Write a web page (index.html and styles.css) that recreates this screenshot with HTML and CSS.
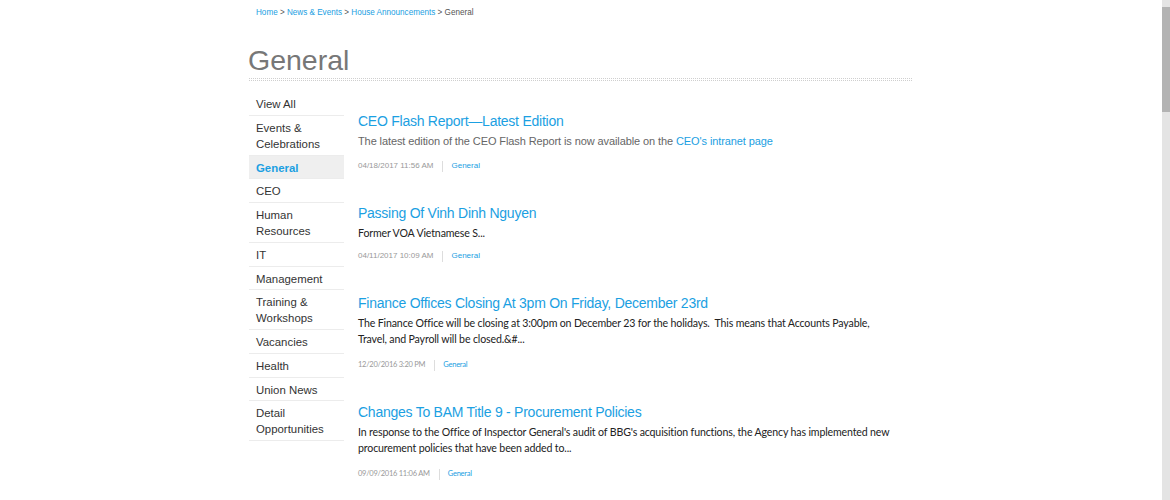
FILE: index.html
```html
<!DOCTYPE html>
<html lang="en">
<head>
  <meta charset="UTF-8">
  <title>General - House Announcements</title>
  <link rel="stylesheet" href="styles.css">
</head>
<body>

<div class="page">
  <div class="crumbs">
    <a href="#">Home</a> &gt; <a href="#">News &amp; Events</a> &gt; <a href="#">House Announcements</a> &gt; General
  </div>

  <h1 class="page-title">General</h1>
  <div class="rule"></div>

  <div class="layout">
    <ul class="side-nav">
      <li><a href="#">View All</a></li>
      <li><a href="#">Events &amp; Celebrations</a></li>
      <li class="active"><a href="#">General</a></li>
      <li><a href="#">CEO</a></li>
      <li><a href="#">Human Resources</a></li>
      <li><a href="#">IT</a></li>
      <li><a href="#">Management</a></li>
      <li><a href="#">Training &amp; Workshops</a></li>
      <li><a href="#">Vacancies</a></li>
      <li><a href="#">Health</a></li>
      <li><a href="#">Union News</a></li>
      <li><a href="#">Detail Opportunities</a></li>
    </ul>

    <div class="posts">
      <div class="post">
        <h3 class="post-title"><a href="#">CEO Flash Report—Latest Edition</a></h3>
        <div class="post-summary">The latest edition of the CEO Flash Report is now available on the <a href="#">CEO's intranet page</a></div>
        <div class="post-meta">
          <span class="post-date">04/18/2017 11:56 AM</span>
          <span class="post-sep"></span>
          <a href="#" class="post-cat">General</a>
        </div>
      </div>

      <div class="post">
        <h3 class="post-title"><a href="#">Passing Of Vinh Dinh Nguyen</a></h3>
        <div class="post-summary plain">Former VOA Vietnamese S...</div>
        <div class="post-meta tight">
          <span class="post-date">04/11/2017 10:09 AM</span>
          <span class="post-sep"></span>
          <a href="#" class="post-cat">General</a>
        </div>
      </div>

      <div class="post">
        <h3 class="post-title"><a href="#">Finance Offices Closing At 3pm On Friday, December 23rd</a></h3>
        <div class="post-summary plain">The Finance Office will be closing at 3:00pm on December 23 for the holidays.&nbsp; This means that Accounts Payable, Travel, and Payroll will be closed.&amp;#...</div>
        <div class="post-meta plain">
          <span class="post-date">12/20/2016 3:20 PM</span>
          <span class="post-sep"></span>
          <a href="#" class="post-cat">General</a>
        </div>
      </div>

      <div class="post">
        <h3 class="post-title"><a href="#">Changes To BAM Title 9 - Procurement Policies</a></h3>
        <div class="post-summary plain">In response to the Office of Inspector General's audit of BBG's acquisition functions, the Agency has implemented new procurement policies that have been added to...</div>
        <div class="post-meta plain">
          <span class="post-date">09/09/2016 11:06 AM</span>
          <span class="post-sep"></span>
          <a href="#" class="post-cat">General</a>
        </div>
      </div>
    </div>
  </div>
</div>

<div class="scrollbar"><div class="scrollbar-thumb"></div></div>

</body>
</html>
```

FILE: styles.css
```css
html {
  overflow: hidden;
}

body {
  font-family: "Liberation Sans", Arial, sans-serif;
  background: #fff;
  color: #333;
  margin: 0;
  padding: 0 8px 0 0;
}

a {
  color: #1ba0e2;
  text-decoration: none;
}

.page {
  width: 664px;
  margin: 0 auto;
}

.crumbs {
  padding: 7px 0 0 7px;
  font-size: 8.15px;
  line-height: 12px;
  color: #555;
}

.page-title {
  margin: 24px 0 1px -1px;
  font-size: 28.5px;
  line-height: 34px;
  font-weight: normal;
  color: #777;
}

.rule {
  height: 3px;
  background-image:
    linear-gradient(#fff 1px, transparent 1px),
    linear-gradient(90deg, #cfcfcf 1px, transparent 1px);
  background-size: 2px 2px, 2px 2px;
  background-position: 0 1px, 0 0;
}

.layout {
  display: flex;
  margin-top: 11px;
}

.side-nav {
  list-style: none;
  margin: 0;
  padding: 0;
  width: 95px;
  flex-shrink: 0;
}

.side-nav li {
  padding: 4px 7px 2.75px;
  border-bottom: 1px solid #ececec;
  font-size: 11.4px;
  line-height: 16px;
}

.side-nav a {
  color: #333;
}

.side-nav li.active {
  background: #efefef;
}

.side-nav li.active a {
  color: #1ba0e2;
  font-weight: bold;
}

.posts {
  margin-left: 14px;
  padding-top: 19px;
  width: 535px;
}

.post {
  margin-bottom: 31px;
}

.post-title {
  margin: 0;
  font-size: 14px;
  line-height: 20px;
  font-weight: normal;
  letter-spacing: -0.25px;
}

.post-summary {
  margin-top: 2px;
  font-size: 11px;
  line-height: 16px;
  color: #666;
  letter-spacing: -0.1px;
}

.post-summary.plain {
  font-family: Lato, "Open Sans", sans-serif;
  font-size: 10.6px;
  letter-spacing: -0.15px;
  color: #222;
}

.post-meta {
  display: flex;
  align-items: center;
  margin-top: 11px;
  font-size: 8px;
  line-height: 12px;
  color: #999;
}

.post-meta.tight {
  margin-top: 9px;
}

.post-meta.plain {
  margin-top: 12px;
  font-family: Lato, "Open Sans", sans-serif;
  font-size: 7.5px;
  letter-spacing: -0.25px;
}

.post-sep {
  width: 1px;
  height: 11px;
  margin: 0 8px 0 9px;
  background: #ddd;
}

.scrollbar {
  position: fixed;
  top: 0;
  right: 0;
  width: 8px;
  height: 100%;
  background: #e4e4e4;
}

.scrollbar-thumb {
  margin-top: 7px;
  height: 105px;
  background: #b3b3b3;
}
```
